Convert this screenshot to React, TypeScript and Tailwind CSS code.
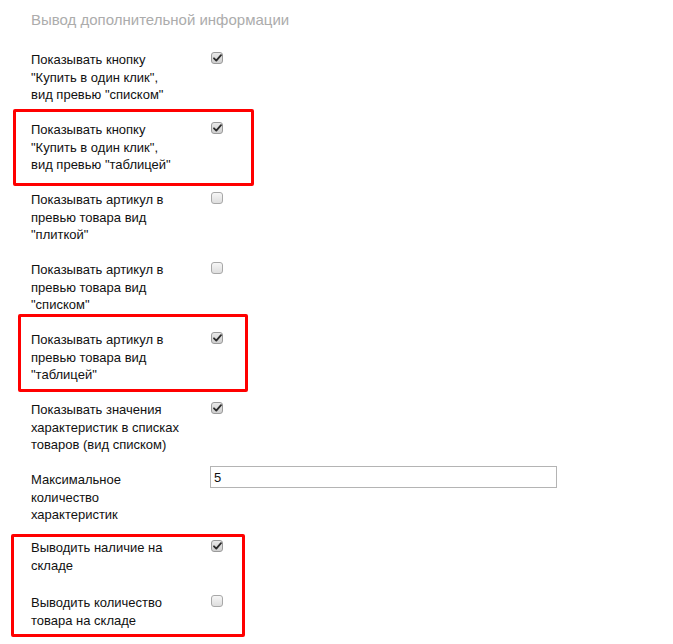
import { Fragment } from 'react'

type Row = {
  label: string[]
  kind: 'check' | 'input'
  checked?: boolean
  value?: string
  mt: string
}

const rows: Row[] = [
  { label: ['Показывать кнопку', '"Купить в один клик",', 'вид превью "списком"'], kind: 'check', checked: true, mt: 'mt-0' },
  { label: ['Показывать кнопку', '"Купить в один клик",', 'вид превью "таблицей"'], kind: 'check', checked: true, mt: 'mt-[17.5px]' },
  { label: ['Показывать артикул в', 'превью товара вид', '"плиткой"'], kind: 'check', checked: false, mt: 'mt-[17.5px]' },
  { label: ['Показывать артикул в', 'превью товара вид', '"списком"'], kind: 'check', checked: false, mt: 'mt-[17.5px]' },
  { label: ['Показывать артикул в', 'превью товара вид', '"таблицей"'], kind: 'check', checked: true, mt: 'mt-[17.5px]' },
  { label: ['Показывать значения', 'характеристик в списках', 'товаров (вид списком)'], kind: 'check', checked: true, mt: 'mt-[17.5px]' },
  { label: ['Максимальное', 'количество', 'характеристик'], kind: 'input', value: '5', mt: 'mt-[17.5px]' },
  { label: ['Выводить наличие на', 'складе'], kind: 'check', checked: true, mt: 'mt-[15.5px]' },
  { label: ['Выводить количество', 'товара на складе'], kind: 'check', checked: false, mt: 'mt-[20px]' },
]

function Checkbox({ checked }: { checked?: boolean }) {
  return (
    <span
      className={
        checked
          ? 'mt-[1px] flex h-[12px] w-[12px] items-center justify-center rounded-[3px] border border-[#9a9a9a] bg-gradient-to-b from-[#e8e8e8] to-[#cfcfcf]'
          : 'mt-[1px] flex h-[12px] w-[12px] items-center justify-center rounded-[3px] border border-[#a8a8a8] bg-gradient-to-b from-[#f6f6f6] to-[#dedede]'
      }
    >
      {checked && (
        <svg width="9" height="8" viewBox="0 0 9 8">
          <path d="M1 4.3 L3.3 6.6 L8 1.2" fill="none" stroke="#2a2a2a" strokeWidth="1.8" strokeLinecap="round" strokeLinejoin="round" />
        </svg>
      )}
    </span>
  )
}

export default function App() {
  return (
    <div className="relative min-h-[644px] w-[673px] bg-white pl-[31px] pt-[11px]" style={{ fontFamily: '"Liberation Sans", Arial, sans-serif' }}>
      <h2 className="text-[15px] leading-[18px] text-[#acacac]">Вывод дополнительной информации</h2>

      <div className="mt-[22px] flex flex-col">
        {rows.map((r, i) => (
          <div key={i} className={'flex items-start ' + r.mt}>
            <div className="w-[180px] shrink-0 text-[13px] leading-[17.5px] text-[#111]">
              {r.label.map((l, j) => (
                <Fragment key={j}>
                  {l}
                  {j < r.label.length - 1 && <br />}
                </Fragment>
              ))}
            </div>
            {r.kind === 'check' ? (
              <Checkbox checked={r.checked} />
            ) : (
              <input
                readOnly
                value={r.value}
                className="-mt-[5px] -ml-[1px] h-[22px] w-[347px] border border-[#b4b4b4] px-[3px] text-[13px] text-[#111] outline-none"
              />
            )}
          </div>
        ))}
      </div>

      {/* выделение красными рамками */}
      <div className="absolute left-[13px] top-[109px] h-[77px] w-[241px] rounded-[2px] border-[3px] border-[#ff0000]" />
      <div className="absolute left-[18px] top-[314px] h-[78px] w-[230px] rounded-[2px] border-[3px] border-[#ff0000]" />
      <div className="absolute left-[11px] top-[534px] h-[103px] w-[234px] rounded-[2px] border-[3px] border-[#ff0000]" />
    </div>
  )
}
